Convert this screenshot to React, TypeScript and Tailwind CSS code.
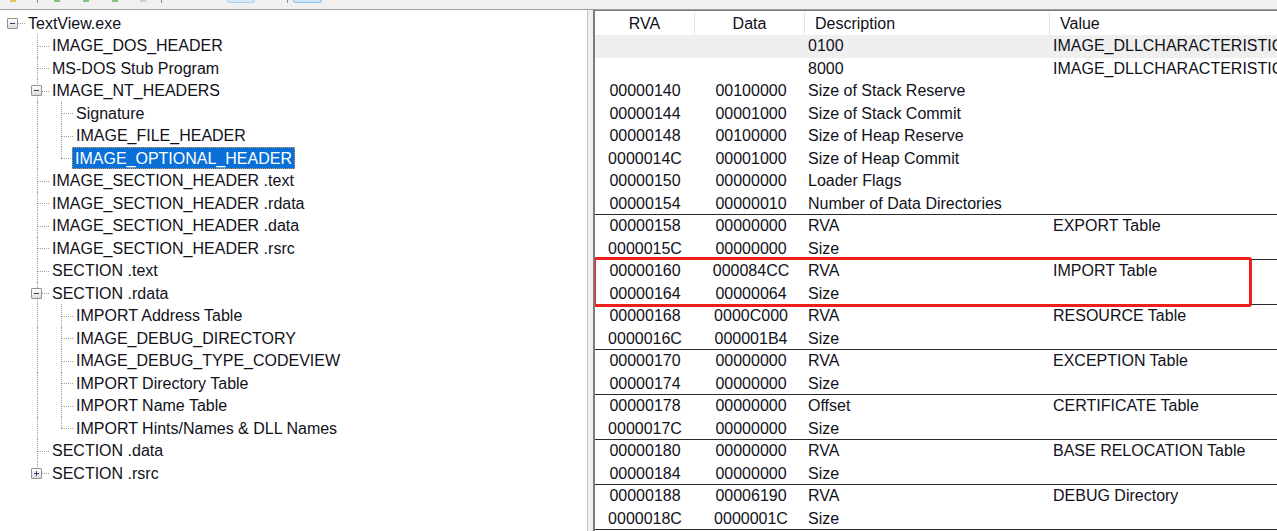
import React from "react";

type Node = {
  label: string;
  level: number;
  box?: "minus" | "plus";
  last?: boolean;
  selected?: boolean;
};

const tree: Node[] = [
  { label: "TextView.exe", level: 0, box: "minus", last: true },
  { label: "IMAGE_DOS_HEADER", level: 1 },
  { label: "MS-DOS Stub Program", level: 1 },
  { label: "IMAGE_NT_HEADERS", level: 1, box: "minus" },
  { label: "Signature", level: 2 },
  { label: "IMAGE_FILE_HEADER", level: 2 },
  { label: "IMAGE_OPTIONAL_HEADER", level: 2, last: true, selected: true },
  { label: "IMAGE_SECTION_HEADER .text", level: 1 },
  { label: "IMAGE_SECTION_HEADER .rdata", level: 1 },
  { label: "IMAGE_SECTION_HEADER .data", level: 1 },
  { label: "IMAGE_SECTION_HEADER .rsrc", level: 1 },
  { label: "SECTION .text", level: 1 },
  { label: "SECTION .rdata", level: 1, box: "minus" },
  { label: "IMPORT Address Table", level: 2 },
  { label: "IMAGE_DEBUG_DIRECTORY", level: 2 },
  { label: "IMAGE_DEBUG_TYPE_CODEVIEW", level: 2 },
  { label: "IMPORT Directory Table", level: 2 },
  { label: "IMPORT Name Table", level: 2 },
  { label: "IMPORT Hints/Names & DLL Names", level: 2, last: true },
  { label: "SECTION .data", level: 1 },
  { label: "SECTION .rsrc", level: 1, box: "plus", last: true },
];

// [rva, data, description, value, group line under the row]
const rows: [string, string, string, string, boolean][] = [
  ["", "", "0100", "IMAGE_DLLCHARACTERISTICS_NX_COMPAT", false],
  ["", "", "8000", "IMAGE_DLLCHARACTERISTICS_TERMINAL_SERVER_AWARE", false],
  ["00000140", "00100000", "Size of Stack Reserve", "", false],
  ["00000144", "00001000", "Size of Stack Commit", "", false],
  ["00000148", "00100000", "Size of Heap Reserve", "", false],
  ["0000014C", "00001000", "Size of Heap Commit", "", false],
  ["00000150", "00000000", "Loader Flags", "", false],
  ["00000154", "00000010", "Number of Data Directories", "", true],
  ["00000158", "00000000", "RVA", "EXPORT Table", false],
  ["0000015C", "00000000", "Size", "", true],
  ["00000160", "000084CC", "RVA", "IMPORT Table", false],
  ["00000164", "00000064", "Size", "", true],
  ["00000168", "0000C000", "RVA", "RESOURCE Table", false],
  ["0000016C", "000001B4", "Size", "", true],
  ["00000170", "00000000", "RVA", "EXCEPTION Table", false],
  ["00000174", "00000000", "Size", "", true],
  ["00000178", "00000000", "Offset", "CERTIFICATE Table", false],
  ["0000017C", "00000000", "Size", "", true],
  ["00000180", "00000000", "RVA", "BASE RELOCATION Table", false],
  ["00000184", "00000000", "Size", "", true],
  ["00000188", "00006190", "RVA", "DEBUG Directory", false],
  ["0000018C", "0000001C", "Size", "", true],
];

function ExpandBox({ kind }: { kind: "minus" | "plus" }) {
  return (
    <div className="absolute left-[6px] top-[6px] z-10 flex h-[11px] w-[11px] items-center justify-center rounded-[1px] border border-[#919191] bg-gradient-to-b from-white to-[#dcdcdc]">
      <div className="relative h-px w-[5px] bg-[#2c3f73]">
        {kind === "plus" && <div className="absolute left-[2px] top-[-2px] h-[5px] w-px bg-[#2c3f73]" />}
      </div>
    </div>
  );
}

function TreeRow({ node }: { node: Node }) {
  const cells = [];
  for (let i = 0; i <= node.level; i++) {
    const own = i === node.level;
    cells.push(
      <div key={i} className="relative h-full w-6 shrink-0">
        {/* ancestor lines: level 1 always continues below level 2 rows */}
        {!own && i === 1 && <div className="absolute left-1/2 top-0 h-full border-l border-dotted border-[#a0a0a0]" />}
        {own && node.level > 0 && (
          <div
            className={`absolute left-1/2 top-0 border-l border-dotted border-[#a0a0a0] ${node.last ? "h-1/2" : "h-full"}`}
          />
        )}
        {own && <div className="absolute left-1/2 right-0 top-1/2 border-t border-dotted border-[#a0a0a0]" />}
        {own && node.box && <ExpandBox kind={node.box} />}
      </div>
    );
  }
  return (
    <div className="flex h-[22.5px] items-stretch pl-px">
      {cells}
      <div
        className={`whitespace-nowrap px-[3px] pt-px leading-[21.5px] ${
          node.selected
            ? "ml-[-1px] bg-[#0a6fd6] text-white outline outline-1 -outline-offset-1 outline-dotted outline-[#d89a4a]"
            : "text-[#11111a]"
        }`}
      >
        {node.label}
      </div>
    </div>
  );
}

function TableRow({ r, shaded }: { r: (typeof rows)[number]; shaded?: boolean }) {
  const [rva, data, desc, value, line] = r;
  return (
    <div
      className={`grid h-[22.5px] grid-cols-[100px_110px_245px_1fr] leading-[22px] text-[#11111a] ${
        shaded ? "bg-[#efefef]" : ""
      } ${line ? "border-b border-[#2a2a2a]" : ""}`}
    >
      <div className="text-center">{rva}</div>
      <div className="pl-[2px] text-center">{data}</div>
      <div className="whitespace-nowrap pl-[3px]">{desc}</div>
      <div className="overflow-hidden whitespace-nowrap pl-[3px]">{value}</div>
    </div>
  );
}

function Toolbar() {
  return (
    <div className="flex h-[9px] items-start bg-[#f0f0f0]">
      <div className="ml-[10px] h-[2px] w-[6px] bg-[#e6c25a]" />
      <div className="ml-[21px] h-[3px] w-px bg-[#8a8a8a]" />
      <div className="ml-[16px] h-[2px] w-[6px] bg-[#7cc47c]" />
      <div className="ml-[23px] h-[2px] w-[6px] bg-[#7cc47c]" />
      <div className="ml-[23px] h-[2px] w-[6px] bg-[#7cc47c]" />
      <div className="ml-[22px] h-[2px] w-[6px] bg-[#cfcfcf]" />
      <div className="ml-[15px] h-[3px] w-px bg-[#8a8a8a]" />
      <div className="ml-[65px] h-[3px] w-[28px] rounded-b-[3px] border border-t-0 border-[#a6d2f5] bg-[#d4eafb]" />
      <div className="ml-[32px] h-[3px] w-px bg-[#8a8a8a]" />
      <div className="ml-[5px] h-[3px] w-[29px] rounded-b-[3px] border border-t-0 border-[#8cc4f0] bg-[#cce6fa]" />
    </div>
  );
}

export default function App() {
  return (
    <div
      className="flex h-[531px] w-[1277px] flex-col overflow-hidden bg-[#f0f0f0] text-[16px]"
      style={{ fontFamily: '"Liberation Sans", Arial, sans-serif' }}
    >
      <Toolbar />
      <div className="h-px bg-[#a0a0a0]" />
      <div className="flex min-h-0 flex-1">
        {/* tree view */}
        <div className="w-[588px] shrink-0 border-r border-[#c4c4c4] bg-white pt-[1.75px]">
          {tree.map((n) => (
            <TreeRow key={n.label} node={n} />
          ))}
        </div>

        <div className="w-[5px] shrink-0" />

        {/* list view */}
        <div className="min-w-0 flex-1 overflow-hidden border-l-2 border-t border-[#7c7c7c] bg-white pt-px">
          <div className="grid h-[23px] grid-cols-[100px_110px_245px_1fr] leading-[23px] text-[#11111a]">
            <div className="border-r border-[#e5e5e5] text-center">RVA</div>
            <div className="border-r border-[#e5e5e5] text-center">Data</div>
            <div className="border-r border-[#e5e5e5] pl-[10px]">Description</div>
            <div className="pl-[10px]">Value</div>
          </div>
          {rows.slice(0, 10).map((r, i) => (
            <TableRow key={i} r={r} shaded={i === 0} />
          ))}
          <div className="relative">
            {rows.slice(10, 12).map((r, i) => (
              <TableRow key={i} r={r} />
            ))}
            <div className="pointer-events-none absolute -bottom-[2px] left-[-2px] top-[-3px] w-[659px] rounded-[3px] border-[3px] border-[#ee1f1a]" />
          </div>
          {rows.slice(12).map((r, i) => (
            <TableRow key={i} r={r} />
          ))}
        </div>
      </div>
    </div>
  );
}
